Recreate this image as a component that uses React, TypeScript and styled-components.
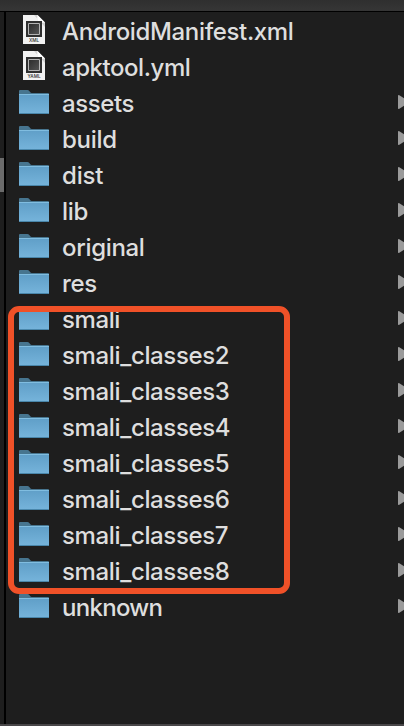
import React from "react";
import styled, { createGlobalStyle } from "styled-components";

const GlobalStyle = createGlobalStyle`
  * { box-sizing: border-box; }
  body { margin: 0; background: #1e1e1e; overflow: hidden; }
`;

const Window = styled.div`
  width: 404px;
  height: 726px;
  display: flex;
  flex-direction: column;
  overflow: hidden;
  background: #1e1e1e;
  font-family: Inter, "Liberation Sans", sans-serif;
`;

const Toolbar = styled.div`
  flex: 0 0 12px;
  background: linear-gradient(#2f2f2f, #363636);
  border-bottom: 1px solid #000;
`;

const Browser = styled.div`
  flex: 1;
  display: flex;
  min-height: 0;
`;

const Gutter = styled.div`
  flex: 0 0 6px;
  padding-top: 146px;
  border-right: 2px solid #000;
`;

const ScrollThumb = styled.div`
  width: 4px;
  height: 34px;
  background: #6b6b6b;
`;

const Column = styled.div`
  position: relative;
  flex: 1;
  padding-top: 1px;
`;

const Row = styled.div`
  height: 36px;
  display: flex;
  align-items: flex-start;
  padding-left: 13px;
`;

const IconCell = styled.div`
  flex: 0 0 43px;
  height: 36px;
  svg { display: block; }
`;

const Name = styled.span<{ $spacing: number }>`
  flex: 1;
  padding-top: 1px;
  font-size: 24px;
  font-weight: 500;
  line-height: 36px;
  letter-spacing: ${(p) => p.$spacing}px;
  color: #dedede;
  white-space: nowrap;
`;

const ArrowCell = styled.div`
  flex: 0 0 6px;
  height: 36px;
  overflow: hidden;
  svg { display: block; }
`;

const Highlight = styled.div`
  position: absolute;
  left: 2px;
  top: 294px;
  width: 282px;
  height: 288px;
  border: 6px solid #f05128;
  border-radius: 11px;
`;

const StatusEdge = styled.div`
  flex: 0 0 2px;
  background: #484648;
`;

const FolderIcon = () => (
  <svg width="30" height="36" viewBox="0 0 30 36">
    <path d="M0 28V6q0-1 1-1h7.500q1 0 1.800 1l1 1.200q.5.8 1.400.8H29q1 0 1 1V28z" fill="#47758f" />
    <path d="M0 9.500h30V28q0 1-1 1H1q-1 0-1-1z" fill="url(#folder)" />
    <path d="M0 9.500h30" stroke="#80bde0" />
    <path d="M.5 28.500h29" stroke="#4986aa" />
  </svg>
);

const DocumentIcon = ({ label }: { label: string }) => (
  <svg width="30" height="36" viewBox="0 0 30 36">
    <path d="M4 2h14.500L26 9.500V31H4z" fill="#f2f2f2" />
    <path d="M15 2h3.500v7.500H26V14z" fill="#d2d2d2" />
    <path d="M18.500 2v7.500H26z" fill="#fff" />
    <path d="M7 8h16v16H7z" fill="#303030" />
    <path d="M9.500 10.500h11v11h-11z" fill="url(#chip)" stroke="#b4b4b4" />
    <text x="15" y="29.200" fontSize="4.600" fontWeight="600" textAnchor="middle" fill="#444">{label}</text>
  </svg>
);

const Gradients = styled.svg`
  position: absolute;
`;

type Entry = { name: string; spacing: number; label?: string };

const entries: Entry[] = [
  { name: "AndroidManifest.xml", spacing: -0.35, label: "XML" },
  { name: "apktool.yml", spacing: -0.45, label: "YAML" },
  { name: "assets", spacing: -0.4 },
  { name: "build", spacing: -0.3 },
  { name: "dist", spacing: -0.2 },
  { name: "lib", spacing: -0.3 },
  { name: "original", spacing: -0.32 },
  { name: "res", spacing: -0.3 },
  { name: "smali", spacing: -0.4 },
  ...[2, 3, 4, 5, 6, 7, 8].map((n) => ({ name: `smali_classes${n}`, spacing: -0.36 })),
  { name: "unknown", spacing: -0.7 },
];

export default function App() {
  return (
    <Window>
      <GlobalStyle />
      <Gradients width="0" height="0">
        <defs>
          <linearGradient id="folder" x1="0" y1="0" x2="0" y2="1">
            <stop offset="0" stopColor="#609fc8" />
            <stop offset="1" stopColor="#76b4db" />
          </linearGradient>
          <linearGradient id="chip" x1="0" y1="0" x2="1" y2="1">
            <stop offset="0" stopColor="#2b2b2b" />
            <stop offset="1" stopColor="#555" />
          </linearGradient>
        </defs>
      </Gradients>
      <Toolbar />
      <Browser>
        <Gutter>
          <ScrollThumb />
        </Gutter>
        <Column>
          {entries.map((e) => (
            <Row key={e.name}>
              <IconCell>{e.label ? <DocumentIcon label={e.label} /> : <FolderIcon />}</IconCell>
              <Name $spacing={e.spacing}>{e.name}</Name>
              <ArrowCell>
                {!e.label && (
                  <svg width="12" height="36" viewBox="0 0 12 36">
                    <path d="M0 11q0-1.500 1.300-.8l9 6q1 .8 0 1.600l-9 6Q0 24.500 0 23z" fill="#9b9b9b" />
                  </svg>
                )}
              </ArrowCell>
            </Row>
          ))}
          <Highlight />
        </Column>
      </Browser>
      <StatusEdge />
    </Window>
  );
}
